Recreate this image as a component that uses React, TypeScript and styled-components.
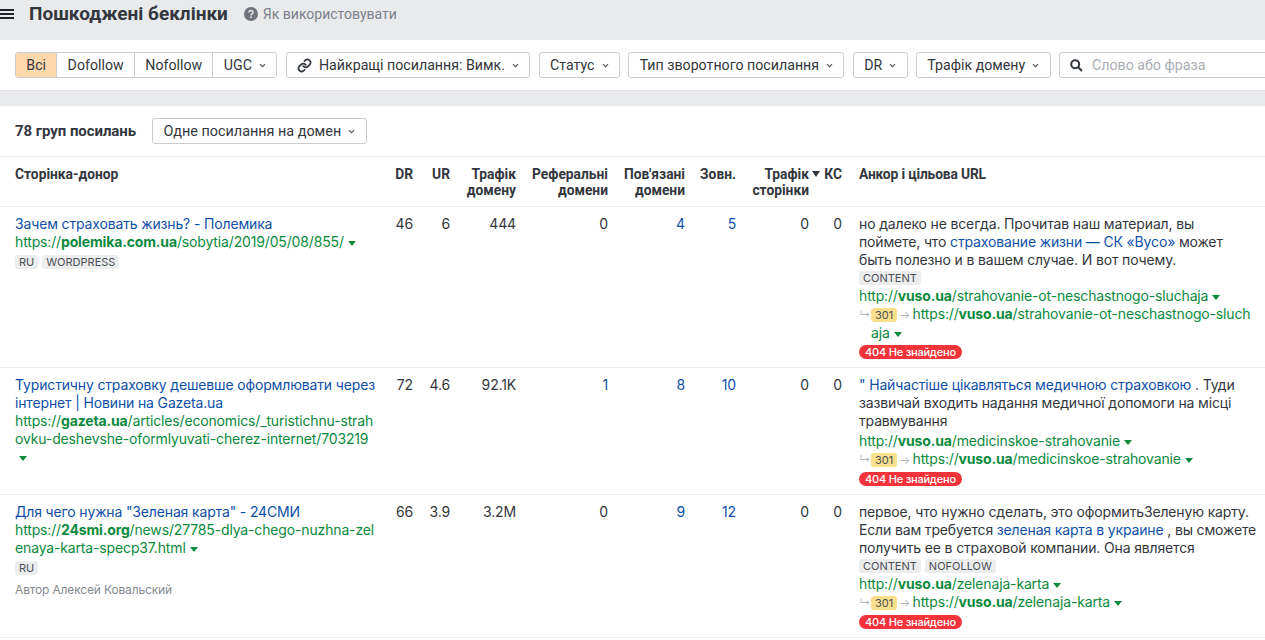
import React from 'react';
import styled, { createGlobalStyle } from 'styled-components';

const GlobalStyle = createGlobalStyle`
  html, body {
    margin: 0;
    padding: 0;
    background: #fff;
    overflow: hidden;
  }
  body {
    font-family: Inter, "Liberation Sans", sans-serif;
    font-size: 14px;
    letter-spacing: -0.15px;
    color: #33373d;
  }
`;

const Page = styled.div`
  width: 1265px;
  height: 640px;
  overflow: hidden;
`;

const TitleBar = styled.header`
  display: flex;
  align-items: center;
  height: 40px;
  box-sizing: border-box;
  padding-bottom: 13px;
  background: #e9eaec;
`;

const MenuIcon = styled.svg`
  width: 14px;
  height: 12px;
  margin-right: 15px;
  color: #1f2329;
`;

const Title = styled.h1`
  margin: 0;
  font-family: Roboto, sans-serif;
  font-size: 19px;
  font-weight: 700;
  letter-spacing: 0;
  color: #33373d;
`;

const HelpLink = styled.span`
  display: flex;
  align-items: center;
  gap: 5px;
  margin-left: 16px;
  font-family: Roboto, sans-serif;
  font-size: 14px;
  letter-spacing: 0;
  color: #7b8089;
`;

const FilterBar = styled.div`
  display: flex;
  align-items: center;
  gap: 8.5px;
  width: 1400px;
  height: 51px;
  box-sizing: border-box;
  padding-left: 15px;
  background: #fff;
  border-bottom: 1px solid #e2e3e6;
`;

const Segmented = styled.div`
  display: flex;
  height: 26px;
  box-sizing: border-box;
  border: 1px solid #c9ccd1;
  border-radius: 3px;
  overflow: hidden;
`;

const Segment = styled.span<{ $active?: boolean }>`
  display: flex;
  align-items: center;
  gap: 7px;
  padding: 0 10.3px;
  font-family: Roboto, sans-serif;
  font-size: 14.2px;
  letter-spacing: 0;
  color: #33373d;
  background: ${p => (p.$active ? '#fdd8ac' : '#fff')};
  & + & {
    border-left: 1px solid #c9ccd1;
  }
`;

const Dropdown = styled.button`
  display: flex;
  align-items: center;
  gap: 7px;
  height: 26px;
  box-sizing: border-box;
  padding: 0 10.3px;
  border: 1px solid #c9ccd1;
  border-radius: 3px;
  background: #fff;
  font-family: Roboto, sans-serif;
  font-size: 14.2px;
  color: #33373d;
  white-space: nowrap;
`;

const GroupDropdown = styled(Dropdown)`
  font-size: 14.4px;
`;

const Chevron = styled.svg`
  width: 7px;
  height: 5px;
  color: #555a62;
`;

const SearchBox = styled.div`
  display: flex;
  align-items: center;
  gap: 9px;
  width: 300px;
  height: 26px;
  box-sizing: border-box;
  padding-left: 10px;
  border: 1px solid #c9ccd1;
  border-radius: 3px 0 0 3px;
  font-family: Roboto, sans-serif;
  font-size: 14.2px;
  letter-spacing: 0;
  color: #a9adb3;
`;

const GrayGap = styled.div`
  height: 15px;
  background: #e9eaec;
`;

const GroupBar = styled.div`
  display: flex;
  align-items: center;
  gap: 16px;
  height: 51px;
  box-sizing: border-box;
  padding-left: 15px;
  border-bottom: 1px solid #eceded;
`;

const GroupCount = styled.span`
  font-family: Roboto, sans-serif;
  font-size: 15px;
  font-weight: 700;
  letter-spacing: -0.06px;
`;

const columns = '365px 33px 37px 66px 92px 77px 51px 84px 22px 1fr';

const HeaderRow = styled.div`
  display: grid;
  grid-template-columns: ${columns};
  height: 50px;
  box-sizing: border-box;
  padding: 9px 0 0 15px;
  border-bottom: 1px solid #eceded;
  font-family: Roboto, sans-serif;
  font-size: 13.8px;
  font-weight: 700;
  letter-spacing: 0;
  line-height: 16px;
  color: #33373d;
`;

const HeadCell = styled.div<{ $right?: boolean; $pad?: number }>`
  position: relative;
  text-align: ${p => (p.$right ? 'right' : 'left')};
  padding-left: ${p => p.$pad ?? 0}px;
  white-space: nowrap;
`;

const SortedHead = styled(HeadCell)`
  padding-right: 11px;
`;

const AnchorHead = styled(HeadCell)`
  letter-spacing: -0.15px;
`;

const SortArrow = styled.svg`
  position: absolute;
  right: 0;
  top: 5px;
  width: 8px;
  height: 6px;
  color: #33373d;
`;

const Row = styled.div<{ $height: number }>`
  display: grid;
  grid-template-columns: ${columns};
  height: ${p => p.$height}px;
  box-sizing: border-box;
  padding: 8px 0 0 15px;
  border-bottom: 1px solid #eceded;
  line-height: 18px;
`;

const DonorCell = styled.div`
  min-width: 0;
  padding-right: 3px;
`;

const NumCell = styled.div<{ $link?: boolean; $pad?: number }>`
  text-align: right;
  padding-right: ${p => p.$pad ?? 0}px;
  color: ${p => (p.$link ? '#0f4fa8' : '#33373d')};
`;

const AnchorCell = styled.div`
  padding-left: 17px;
  box-sizing: border-box;
  width: 410px;
`;

const AnchorText = styled.div`
  white-space: nowrap;
`;

const DonorTitle = styled.a`
  display: block;
  color: #0f4fa8;
  white-space: nowrap;
`;

const GreenUrl = styled.span`
  color: #0b8a3e;
  word-break: break-all;
  & b {
    font-weight: 700;
  }
`;

const UrlLine = styled.div<{ $gap?: boolean }>`
  margin-top: ${p => (p.$gap ? 2 : 0)}px;
  color: #0b8a3e;
`;

const Caret = styled.svg`
  display: inline-block;
  width: 8px;
  height: 5px;
  margin-left: 4px;
  vertical-align: 1px;
  color: #0b8a3e;
`;

const TagRow = styled.div`
  display: flex;
  gap: 4px;
  height: 18px;
  align-items: center;
`;

const DonorTagRow = styled(TagRow)`
  margin-top: 2px;
`;

const Tag = styled.span`
  padding: 0 4px;
  height: 14px;
  line-height: 14px;
  border-radius: 3px;
  background: #eceded;
  font-size: 11px;
  letter-spacing: 0;
  color: #4a4e55;
`;

const Author = styled.div`
  margin-top: 4px;
  font-size: 12px;
  color: #858a91;
`;

const AnchorLink = styled.span`
  color: #0f4fa8;
`;

const RedirectLine = styled.div`
  position: relative;
  padding-left: 12px;
  color: #0b8a3e;
  word-break: break-all;
`;

const RedirectGlyph = styled.span`
  color: #b5b8bd;
  font-size: 11px;
  margin: 0 2.5px;
`;

const HookGlyph = styled(RedirectGlyph)`
  position: absolute;
  left: -2px;
  top: 0;
`;

const CodeTag = styled.span`
  display: inline-block;
  padding: 0 4px;
  height: 14px;
  line-height: 14px;
  border-radius: 3px;
  background: #fbe08c;
  font-size: 11px;
  letter-spacing: 0;
  color: #4a4e55;
  word-break: normal;
`;

const ErrorBadge = styled.span`
  display: inline-block;
  height: 14px;
  line-height: 14px;
  padding: 0 6px;
  border-radius: 7px;
  background: #f5333a;
  font-size: 11px;
  font-weight: 500;
  letter-spacing: -0.2px;
  color: #fff;
`;

const BadgeRow = styled.div`
  display: flex;
  align-items: center;
  height: 18px;
  margin-top: 1px;
`;

const ChevronDown = () => (
  <Chevron viewBox="0 0 8 6" fill="none" stroke="currentColor" strokeWidth="1.3">
    <path d="M1 1.5 4 4.5 7 1.5" />
  </Chevron>
);

const GreenCaret = () => (
  <Caret viewBox="0 0 8 5" fill="currentColor">
    <path d="M0 0h8L4 5z" />
  </Caret>
);

const Url = ({ scheme, host, path }: { scheme: string; host: string; path: string }) => (
  <GreenUrl>
    {scheme}
    <b>{host}</b>
    {path}
    <GreenCaret />
  </GreenUrl>
);

const Redirect = ({ path }: { path: string }) => (
  <RedirectLine>
    <HookGlyph>↳</HookGlyph>
    <CodeTag>301</CodeTag>
    <RedirectGlyph>→</RedirectGlyph>
    <Url scheme="https://" host="vuso.ua" path={path} />
  </RedirectLine>
);

const NotFound = () => (
  <BadgeRow>
    <ErrorBadge>404 Не знайдено</ErrorBadge>
  </BadgeRow>
);

type Stats = { dr: string; ur: string; traffic: string; refs: string; linked: string; ext: string };

const Numbers = ({ dr, ur, traffic, refs, linked, ext }: Stats) => (
  <>
    <NumCell>{dr}</NumCell>
    <NumCell>{ur}</NumCell>
    <NumCell>{traffic}</NumCell>
    <NumCell $link={refs !== '0'}>{refs}</NumCell>
    <NumCell $link>{linked}</NumCell>
    <NumCell $link>{ext}</NumCell>
    <NumCell $pad={11}>0</NumCell>
    <NumCell>0</NumCell>
  </>
);

export default function App() {
  return (
    <Page>
      <GlobalStyle />
      <TitleBar>
        <MenuIcon viewBox="0 0 14 12" fill="currentColor">
          <rect x="0" y="1" width="14" height="2" />
          <rect x="0" y="5" width="14" height="2" />
          <rect x="0" y="9" width="14" height="2" />
        </MenuIcon>
        <Title>Пошкоджені беклінки</Title>
        <HelpLink>
          <svg width="14" height="14" viewBox="0 0 14 14">
            <circle cx="7" cy="7" r="7" fill="#6f747c" />
            <path d="M5 5.4C5 4.2 6 3.6 7 3.6s2 .6 2 1.8c0 1.5-2 1.5-2 3" fill="none" stroke="#e9eaec" strokeWidth="1.5" />
            <rect x="6.2" y="9.4" width="1.6" height="1.6" fill="#e9eaec" />
          </svg>
          Як використовувати
        </HelpLink>
      </TitleBar>

      <FilterBar>
        <Segmented>
          <Segment $active>Всі</Segment>
          <Segment>Dofollow</Segment>
          <Segment>Nofollow</Segment>
          <Segment>
            UGC <ChevronDown />
          </Segment>
        </Segmented>
        <Dropdown>
          <svg width="15" height="15" viewBox="0 0 24 24" fill="none" stroke="#33373d" strokeWidth="2.8" strokeLinecap="round">
            <path d="M10 13a5 5 0 0 0 7.5.5l3-3a5 5 0 0 0-7-7l-1.7 1.7" />
            <path d="M14 11a5 5 0 0 0-7.5-.5l-3 3a5 5 0 0 0 7 7l1.7-1.7" />
          </svg>
          Найкращі посилання: Вимк.
          <ChevronDown />
        </Dropdown>
        <Dropdown>
          Статус <ChevronDown />
        </Dropdown>
        <Dropdown>
          Тип зворотного посилання <ChevronDown />
        </Dropdown>
        <Dropdown>
          DR <ChevronDown />
        </Dropdown>
        <Dropdown>
          Трафік домену <ChevronDown />
        </Dropdown>
        <SearchBox>
          <svg width="13" height="13" viewBox="0 0 13 13" fill="none" stroke="#33373d" strokeWidth="2">
            <circle cx="5.2" cy="5.2" r="4" />
            <path d="M8.2 8.2 12 12" />
          </svg>
          Слово або фраза
        </SearchBox>
      </FilterBar>

      <GrayGap />

      <GroupBar>
        <GroupCount>78 груп посилань</GroupCount>
        <GroupDropdown>
          Одне посилання на домен <ChevronDown />
        </GroupDropdown>
      </GroupBar>

      <HeaderRow>
        <HeadCell>Сторінка-донор</HeadCell>
        <HeadCell $right>DR</HeadCell>
        <HeadCell $right>UR</HeadCell>
        <HeadCell $right>
          Трафік
          <br />
          домену
        </HeadCell>
        <HeadCell $right>
          Реферальні
          <br />
          домени
        </HeadCell>
        <HeadCell $right>
          Пов'язані
          <br />
          домени
        </HeadCell>
        <HeadCell $right>Зовн.</HeadCell>
        <SortedHead $right>
          Трафік
          <SortArrow viewBox="0 0 8 6" fill="currentColor">
            <path d="M0 0h8L4 6z" />
          </SortArrow>
          <br />
          сторінки
        </SortedHead>
        <HeadCell $right>КС</HeadCell>
        <AnchorHead $pad={17}>Анкор і цільова URL</AnchorHead>
      </HeaderRow>

      <Row $height={161}>
        <DonorCell>
          <DonorTitle>Зачем страховать жизнь? - Полемика</DonorTitle>
          <Url scheme="https://" host="polemika.com.ua" path="/sobytia/2019/05/08/855/" />
          <DonorTagRow>
            <Tag>RU</Tag>
            <Tag>WORDPRESS</Tag>
          </DonorTagRow>
        </DonorCell>
        <Numbers dr="46" ur="6" traffic="444" refs="0" linked="4" ext="5" />
        <AnchorCell>
          <AnchorText>
            но далеко не всегда. Прочитав наш материал, вы
            <br />
            поймете, что <AnchorLink>страхование жизни — СК «Вусо»</AnchorLink> может
            <br />
            быть полезно и в вашем случае. И вот почему.
          </AnchorText>
          <TagRow>
            <Tag>CONTENT</Tag>
          </TagRow>
          <UrlLine>
            <Url scheme="http://" host="vuso.ua" path="/strahovanie-ot-neschastnogo-sluchaja" />
          </UrlLine>
          <Redirect path="/strahovanie-ot-neschastnogo-sluchaja" />
          <NotFound />
        </AnchorCell>
      </Row>

      <Row $height={127}>
        <DonorCell>
          <DonorTitle>
            Туристичну страховку дешевше оформлювати через
            <br />
            інтернет | Новини на Gazeta.ua
          </DonorTitle>
          <Url
            scheme="https://"
            host="gazeta.ua"
            path="/articles/economics/_turistichnu-strahovku-deshevshe-oformlyuvati-cherez-internet/703219"
          />
        </DonorCell>
        <Numbers dr="72" ur="4.6" traffic="92.1K" refs="1" linked="8" ext="10" />
        <AnchorCell>
          <AnchorText>
            <AnchorLink>" Найчастіше цікавляться медичною страховкою</AnchorLink> . Туди
            <br />
            зазвичай входить надання медичної допомоги на місці
            <br />
            травмування
          </AnchorText>
          <UrlLine $gap>
            <Url scheme="http://" host="vuso.ua" path="/medicinskoe-strahovanie" />
          </UrlLine>
          <Redirect path="/medicinskoe-strahovanie" />
          <NotFound />
        </AnchorCell>
      </Row>

      <Row $height={143}>
        <DonorCell>
          <DonorTitle>Для чего нужна "Зеленая карта" - 24СМИ</DonorTitle>
          <Url scheme="https://" host="24smi.org" path="/news/27785-dlya-chego-nuzhna-zelenaya-karta-specp37.html" />
          <DonorTagRow>
            <Tag>RU</Tag>
          </DonorTagRow>
          <Author>Автор Алексей Ковальский</Author>
        </DonorCell>
        <Numbers dr="66" ur="3.9" traffic="3.2M" refs="0" linked="9" ext="12" />
        <AnchorCell>
          <AnchorText>
            первое, что нужно сделать, это оформитьЗеленую карту.
            <br />
            Если вам требуется <AnchorLink>зеленая карта в украине</AnchorLink> , вы сможете
            <br />
            получить ее в страховой компании. Она является
          </AnchorText>
          <TagRow>
            <Tag>CONTENT</Tag>
            <Tag>NOFOLLOW</Tag>
          </TagRow>
          <UrlLine>
            <Url scheme="http://" host="vuso.ua" path="/zelenaja-karta" />
          </UrlLine>
          <Redirect path="/zelenaja-karta" />
          <NotFound />
        </AnchorCell>
      </Row>
    </Page>
  );
}
